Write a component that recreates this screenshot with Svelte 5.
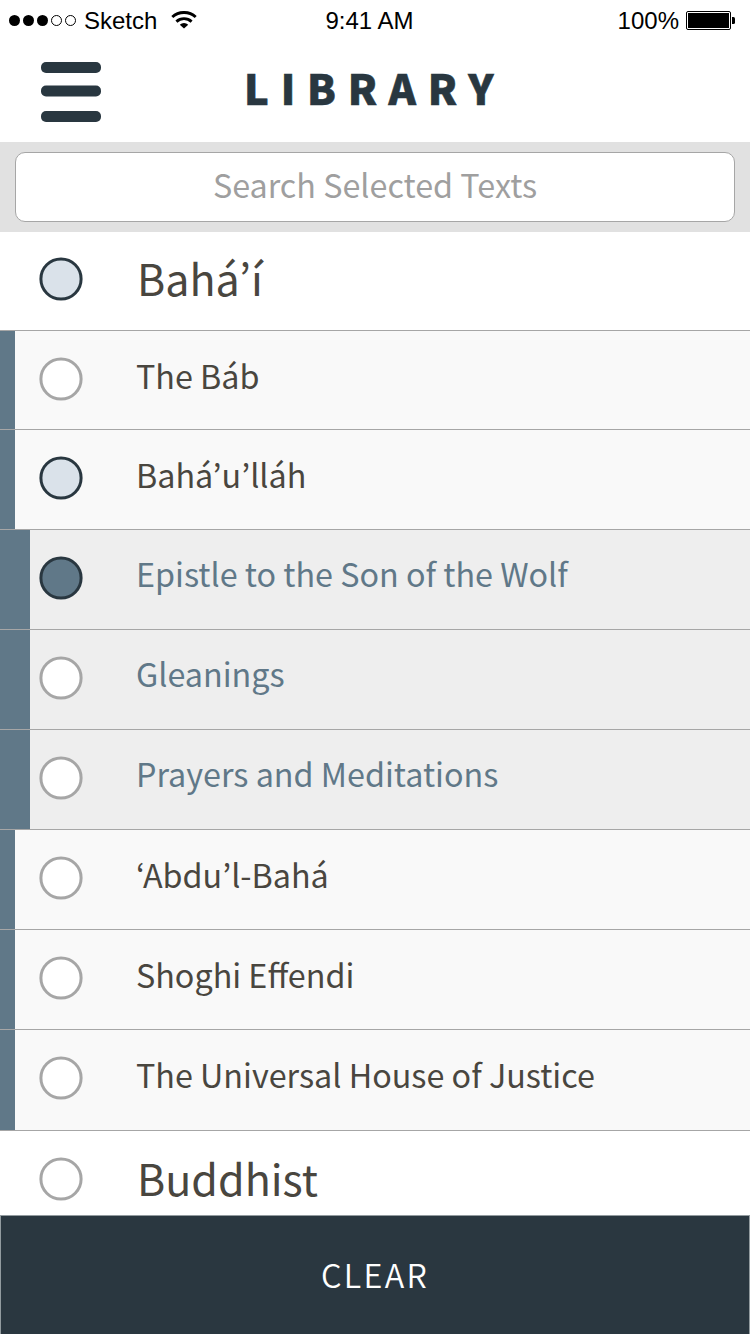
<script>
  const rows = [
    { text: 'Bahá’í', level: 'faith', state: 'partial', first: true },
    { text: 'The Báb', level: 'author', state: 'off', short: true },
    { text: 'Bahá’u’lláh', level: 'author', state: 'partial' },
    { text: 'Epistle to the Son of the Wolf', level: 'book', state: 'on' },
    { text: 'Gleanings', level: 'book', state: 'off' },
    { text: 'Prayers and Meditations', level: 'book', state: 'off' },
    { text: '‘Abdu’l-Bahá', level: 'author', state: 'off' },
    { text: 'Shoghi Effendi', level: 'author', state: 'off' },
    { text: 'The Universal House of Justice', level: 'author', state: 'off', tall: true },
    { text: 'Buddhist', level: 'faith', state: 'off', last: true }
  ];
</script>

<main>
  <div class="status">
    <div class="side">
      <svg class="signal" width="68" height="12" viewBox="0 0 68 12">
        <circle cx="5.500" cy="5.500" r="5.500" /><circle cx="19.500" cy="5.500" r="5.500" /><circle cx="33.500" cy="5.500" r="5.500" />
        <g fill="none" stroke="#000"><circle cx="47.500" cy="5.500" r="5" /><circle cx="61.500" cy="5.500" r="5" /></g>
      </svg>
      <span class="carrier">Sketch</span>
      <svg class="wifi" width="26" height="18" viewBox="0 0 26 18">
        <g fill="none" stroke="#000" stroke-width="2.900">
          <path d="M1.300 6A17.300 17.300 0 0 1 24.700 6" />
          <path d="M5.400 10.600A11.300 11.300 0 0 1 20.600 10.600" />
        </g>
        <path d="M8.800 13.700A6.200 6.200 0 0 1 17.200 13.700L13 17.600Z" />
      </svg>
    </div>
    <span class="time">9:41 AM</span>
    <div class="side end">
      <span>100%</span>
      <svg class="battery" width="49" height="20" viewBox="0 0 49 20">
        <rect x=".5" y=".5" width="44" height="18" rx="1.500" fill="none" stroke="#000" />
        <rect x="2" y="2" width="41" height="15" />
        <path d="M46 6h1.500q1.500 0 1.500 1.500v4q0 1.500-1.500 1.500H46Z" />
      </svg>
    </div>
  </div>
  <header>
    <svg class="menu" width="60" height="60" viewBox="0 0 60 60">
      <rect y="0" width="60" height="11" rx="5" /><rect y="23.500" width="60" height="11" rx="5" /><rect y="49" width="60" height="11" rx="5" />
    </svg>
    <h1>LIBRARY</h1>
  </header>
  <div class="search"><div class="field">Search Selected Texts</div></div>
  <div class="list">
    {#each rows as r}
      <div class="row {r.level}" class:first={r.first} class:short={r.short} class:tall={r.tall} class:last={r.last}>
        <span class="bar"></span>
        <svg class="dot {r.state}" width="44" height="44" viewBox="0 0 44 44"><circle cx="22" cy="22" r="20.100" /></svg>
        <span class="label">{r.text}</span>
      </div>
    {/each}
  </div>
  <footer>CLEAR</footer>
</main>

<style>
  :global(body) { overflow: hidden; background: #fff; }
  main { width: 750px; height: 1334px; overflow: hidden; display: flex; flex-direction: column; background: #fff; font-family: "Noto Sans CJK KR", sans-serif; font-size: 32.3px; color: #49463f; }
  .status { height: 40px; flex: none; display: grid; grid-template-columns: 1fr auto 1fr; font: 24px/42px "Liberation Sans", sans-serif; color: #000; }
  .side { display: flex; align-items: flex-start; padding-left: 9px; }
  .end { justify-content: flex-end; padding: 0 15px 0 0; }
  .signal { margin: 15px 7px 0 0; }
  .carrier { width: 87px; }
  .wifi { margin-top: 11px; }
  .time { margin-right: 11px; }
  .battery { margin: 11px 0 0 7px; }
  header { height: 102px; flex: none; box-sizing: border-box; display: grid; grid-template-columns: 60px auto; column-gap: 143px; padding: 22px 0 0 41px; color: #293740; }
  .menu { fill: #293740; }
  h1 { margin: 0; font-size: 41.6px; line-height: 50px; font-weight: 900; letter-spacing: 11.8px; -webkit-text-stroke: .6px #293740; }
  .search { height: 90px; flex: none; background: #e1e1e1; padding: 10px 15px; box-sizing: border-box; }
  .field { height: 70px; box-sizing: border-box; border: 1px solid #a6a6a6; border-radius: 10px; background: #fff; color: #9f9f9f; line-height: 62px; text-align: center; }
  .list { flex: none; }
  .row { height: 100px; box-sizing: border-box; display: flex; border-bottom: 1px solid #a6a6a6; }
  .first, .short { height: 99px; }
  .tall { height: 101px; }
  .last { height: 84px; border-bottom: 0; }
  .bar { width: 0; background: #607888; }
  .dot { margin: 26px 0 0 39px; stroke-width: 3; stroke: #a6a6a6; fill: #fff; }
  .first .dot { margin-top: 25px; }
  .label { margin: 24px 0 0 53px; line-height: 40px; white-space: nowrap; }
  .faith .label { margin: 25px 0 0 54px; font-size: 43px; }
  .last .label { margin-top: 26px; }
  .author { background: #f9f9f9; }
  .author .bar { width: 15px; }
  .author .dot { margin-left: 24px; }
  .book { background: #eee; color: #607888; }
  .book .bar { width: 30px; }
  .book .dot { margin-left: 9px; }
  .book .label { margin-top: 23px; }
  .dot.partial { stroke: #293740; fill: #dae2ea; }
  .dot.on { stroke: #293740; fill: #607888; }
  footer { height: 119px; flex: none; box-sizing: border-box; padding-top: 1px; border: 1px solid #929b9f; border-bottom: 0; background: #2a3740; color: #fff; text-align: center; line-height: 115px; font-weight: 350; letter-spacing: 2.3px; }
</style>
